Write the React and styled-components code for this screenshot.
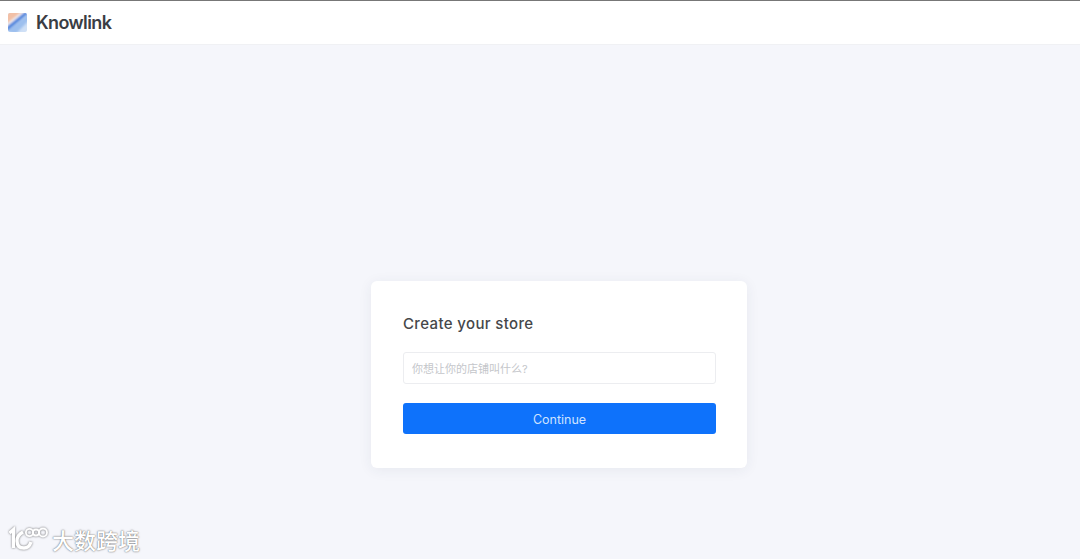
import React from "react";
import styled, { createGlobalStyle } from "styled-components";

const GlobalStyle = createGlobalStyle`
	html, body {
		margin: 0;
		padding: 0;
		height: 100%;
		background: #f5f6fb;
		font-family: Inter, "Noto Sans CJK SC", sans-serif;
	}
	* {
		box-sizing: border-box;
	}
`;

const Page = styled.div`
	position: relative;
	display: flex;
	flex-direction: column;
	width: 1080px;
	height: 559px;
	overflow: hidden;
	background: #f5f6fb;
`;

const TopLine = styled.div`
	height: 1px;
	background: #777;
`;

const Header = styled.header`
	display: flex;
	align-items: center;
	gap: 9px;
	height: 44px;
	padding: 0 0 0 8px;
	background: #fff;
	border-bottom: 1px solid #f0f1f4;
`;

const Brand = styled.span`
	font-size: 18px;
	font-weight: 600;
	letter-spacing: -0.6px;
	color: #3a3d44;
`;

const Main = styled.main`
	flex: 1;
	display: flex;
	justify-content: center;
	align-items: flex-start;
	padding: 236px 0 0 38px;
`;

const Card = styled.div`
	display: flex;
	flex-direction: column;
	width: 376px;
	height: 187px;
	padding: 33px 31px 32px 32px;
	background: #fff;
	border-radius: 6px;
	box-shadow: 0 2px 14px rgba(40, 50, 90, 0.07);
`;

const Title = styled.h1`
	margin: 0 0 18px;
	font-size: 15px;
	line-height: 20px;
	font-weight: 500;
	letter-spacing: 0.36px;
	color: #45474a;
`;

const Input = styled.input`
	height: 32px;
	width: 100%;
	padding: 1px 8px 0;
	margin-bottom: 19px;
	border: 1px solid #ecedf0;
	border-radius: 3px;
	background: #fff;
	font-family: inherit;
	font-size: 11px;
	outline: none;

	&::placeholder {
		color: #c4c6ca;
		opacity: 1;
	}
`;

const Button = styled.button`
	height: 31px;
	width: 100%;
	padding: 1px 0 0;
	border: none;
	border-radius: 3px;
	background: #0e72fb;
	color: #cfe2ff;
	font-family: inherit;
	font-size: 12.5px;
	cursor: pointer;
`;

const Watermark = styled.div`
	position: absolute;
	left: 9px;
	top: 524px;
	display: flex;
	align-items: center;
	gap: 4px;
`;

const WatermarkText = styled.span`
	font-family: "Noto Sans CJK SC", sans-serif;
	font-size: 22px;
	font-weight: 500;
	line-height: 30px;
	color: #fff;
	text-shadow: 0 0 2px rgba(0, 0, 0, 0.5), 0 0 1px rgba(0, 0, 0, 0.35);
`;

const Logo = () => (
	<svg width="19" height="19" viewBox="0 0 20 20">
		<defs>
			<clipPath id="logoClip">
				<rect width="20" height="20" rx="2" />
			</clipPath>
			<filter id="logoBlur">
				<feGaussianBlur stdDeviation="0.9" />
			</filter>
		</defs>
		<g clipPath="url(#logoClip)">
			<rect width="20" height="20" fill="#cfe0f6" />
			<g filter="url(#logoBlur)">
				<path d="M-2 -2 H16 L-2 12 Z" fill="#f2c0a6" />
				<path d="M-2 12 L16 -2 H19 L-2 15 Z" fill="#f7f3f2" />
				<path d="M-2 15 L19 -2 H24 L-1 19 Z" fill="#4a82dc" />
				<path d="M-1 19 L22 1 V8 L8 22 Z" fill="#9cbfee" />
			</g>
		</g>
	</svg>
);

const WatermarkLogo = () => (
	<svg
		width="39"
		height="30"
		viewBox="0 0 39 30"
		fill="none"
		stroke="#fff"
		style={{ filter: "drop-shadow(0 0 1px rgba(0,0,0,.55))" }}
	>
		<path d="M0.5 9 L4.5 5.5 V24" strokeWidth="3.2" />
		<path d="M14 8 Q8 11 8 17 Q8 24 15 24 Q20 24 22 18" strokeWidth="3.4" />
		<circle cx="20.5" cy="8.5" r="3.6" strokeWidth="1.8" />
		<circle cx="27" cy="8.5" r="3" strokeWidth="1.8" />
		<circle cx="34" cy="8.5" r="4" strokeWidth="1.8" />
	</svg>
);

const App = () => {
	return (
		<Page>
			<GlobalStyle />
			<TopLine />
			<Header>
				<Logo />
				<Brand>Knowlink</Brand>
			</Header>
			<Main>
				<Card>
					<Title>Create your store</Title>
					<Input placeholder="你想让你的店铺叫什么?" />
					<Button>Continue</Button>
				</Card>
			</Main>
			<Watermark>
				<WatermarkLogo />
				<WatermarkText>大数跨境</WatermarkText>
			</Watermark>
		</Page>
	);
};

export default App;
